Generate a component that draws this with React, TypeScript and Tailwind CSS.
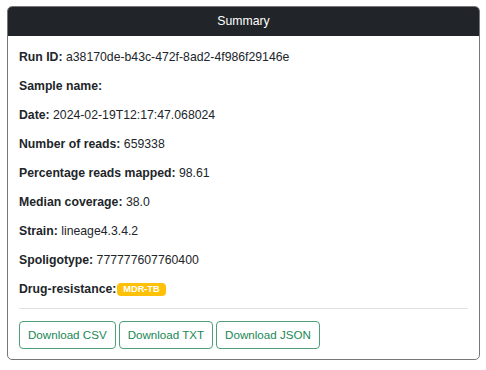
import React from 'react'

const rows: { label: string; value?: string }[] = [
  { label: 'Run ID:', value: 'a38170de-b43c-472f-8ad2-4f986f29146e' },
  { label: 'Sample name:' },
  { label: 'Date:', value: '2024-02-19T12:17:47.068024' },
  { label: 'Number of reads:', value: '659338' },
  { label: 'Percentage reads mapped:', value: '98.61' },
  { label: 'Median coverage:', value: '38.0' },
  { label: 'Strain:', value: 'lineage4.3.4.2' },
  { label: 'Spoligotype:', value: '777777607760400' },
]

const DownloadButton = ({ children }: { children: React.ReactNode }) => (
  <button className="h-[28px] px-[8px] border border-[#4f9f7a] rounded-[4px] text-[#198754] text-[11.6px] leading-[18px] bg-white">
    {children}
  </button>
)

export default function App() {
  return (
    <div
      className="w-[486px] h-[370px] bg-white pt-[6px] pl-[7px] text-[12.25px] text-[#212529]"
      style={{ fontFamily: '"Liberation Sans", Arial, sans-serif' }}
    >
      <div className="w-[473px] border border-[#777777] rounded-[5px] overflow-hidden">
        <div className="h-[29px] bg-[#212529] text-white flex items-center justify-center">
          Summary
        </div>
        <div className="px-[11px] pt-[12px] pb-[10px]">
          <div className="flex flex-col gap-[11px]">
            {rows.map((r) => (
              <div key={r.label} className="leading-[18px]">
                <span className="font-bold">{r.label}</span>
                {r.value ? ` ${r.value}` : ''}
              </div>
            ))}
            <div className="leading-[18px] flex items-center">
              <span className="font-bold">Drug-resistance:</span>
              <span className="ml-[1px] bg-[#ffc107] text-white font-bold text-[9.2px] leading-[9px] px-[6px] py-[2px] rounded-[4px]">
                MDR-TB
              </span>
            </div>
          </div>
          <div className="mt-[10px] border-t border-[#e2e2e2]" />
          <div className="mt-[12px] flex gap-[3px]">
            <DownloadButton>Download CSV</DownloadButton>
            <DownloadButton>Download TXT</DownloadButton>
            <DownloadButton>Download JSON</DownloadButton>
          </div>
        </div>
      </div>
    </div>
  )
}
